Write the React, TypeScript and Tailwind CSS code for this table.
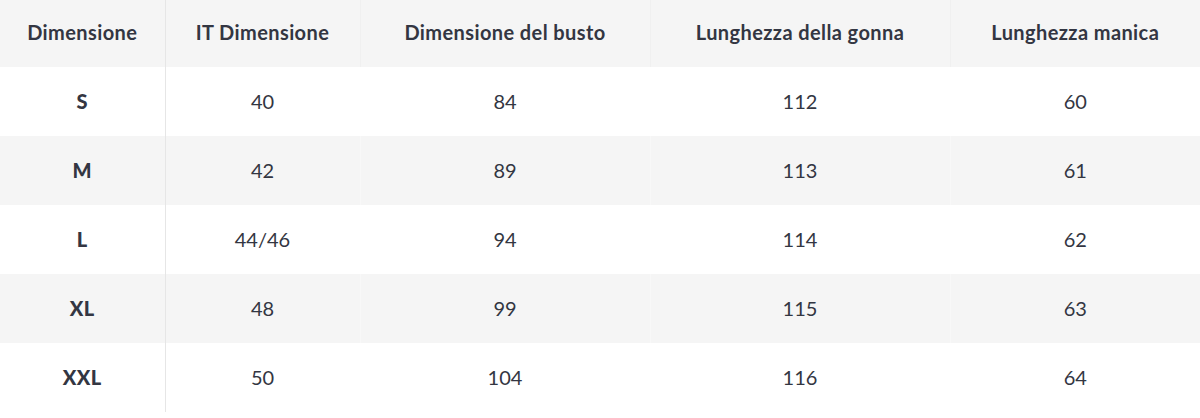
const headers = [
  "Dimensione",
  "IT Dimensione",
  "Dimensione del busto",
  "Lunghezza della gonna",
  "Lunghezza manica",
];

const rows = [
  ["S", "40", "84", "112", "60"],
  ["M", "42", "89", "113", "61"],
  ["L", "44/46", "94", "114", "62"],
  ["XL", "48", "99", "115", "63"],
  ["XXL", "50", "104", "116", "64"],
];

const widths = ["w-[165px]", "w-[195px]", "w-[290px]", "w-[300px]", "w-[250px]"];

export default function App() {
  return (
    <div className="w-[1200px] h-[418px] bg-white font-['Lato',sans-serif] text-[#333642]">
      <table className="w-[1200px] table-fixed border-collapse">
        <thead>
          <tr className="h-[67px] bg-[#f5f5f5]">
            {headers.map((h, i) => (
              <th
                key={h}
                className={`${widths[i]} pb-[4px] text-center text-[20px] font-bold tracking-[0.02em] ${
                  i === 0 ? "border-r border-[#e6e6e6]" : i < 4 ? "border-r border-[#f0f0f0]" : ""
                }`}
              >
                {h}
              </th>
            ))}
          </tr>
        </thead>
        <tbody>
          {rows.map((row, r) => (
            <tr key={row[0]} className={`h-[69px] ${r % 2 === 1 ? "bg-[#f5f5f5]" : "bg-white"}`}>
              {row.map((cell, i) => (
                <td
                  key={i}
                  className={`pb-[2px] text-center text-[20px] ${i === 0 ? "font-black tracking-[0.02em]" : "font-normal"} ${
                    i === 0
                      ? "border-r border-[#e6e6e6]"
                      : i < 4
                      ? r % 2 === 1
                        ? "border-r border-[#f8f8f8]"
                        : "border-r border-white"
                      : ""
                  }`}
                >
                  {cell}
                </td>
              ))}
            </tr>
          ))}
        </tbody>
      </table>
    </div>
  );
}
